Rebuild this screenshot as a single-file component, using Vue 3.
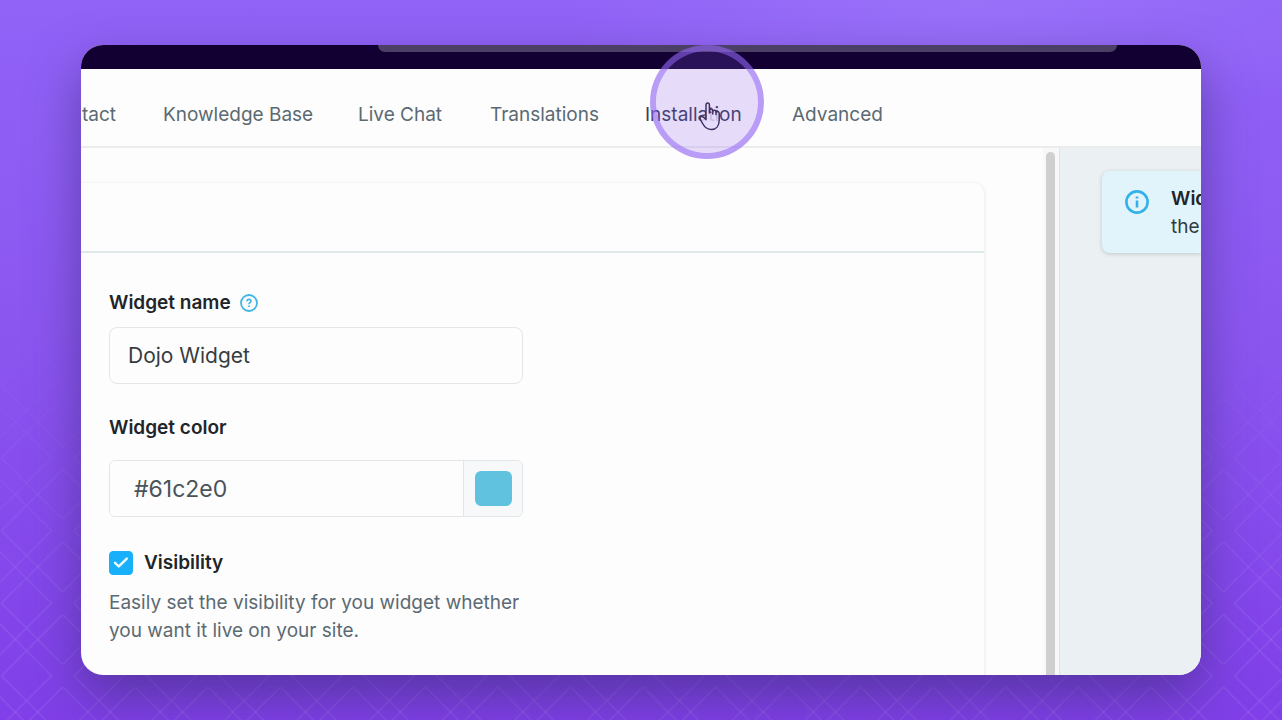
<script setup>
import { ref } from 'vue'

const tabs = ['Contact', 'Knowledge Base', 'Live Chat', 'Translations', 'Installation', 'Advanced']
const widgetName = ref('Dojo Widget')
const widgetColor = ref('#61c2e0')
const visible = ref(true)

// Neighbouring motifs overlap, so each pattern tile draws itself and its neighbours.
const offsets = [-1, 0, 1, 2].flatMap((x) => [-1, 0, 1, 2].map((y) => [x * 72.5, y * 72.5]))
</script>

<template>
  <div class="stage">
    <svg class="lattice" aria-hidden="true">
      <defs>
        <pattern id="diamonds" x="26.5" y="22.9" width="72.54" height="72.54" patternUnits="userSpaceOnUse">
          <path
            v-for="([x, y], i) in offsets"
            :key="i"
            :transform="`translate(${x} ${y})`"
            d="M36 -61L-25 0L36 61M-36 -61L25 0L-36 61"
            fill="none"
            stroke="#b79cf5"
            stroke-opacity=".22"
            stroke-width="1.3"
          />
        </pattern>
      </defs>
      <rect width="100%" height="100%" fill="url(#diamonds)" />
    </svg>

    <div class="window">
      <div class="topbar"><div class="topbar-field"></div></div>

      <nav class="tabs">
        <div v-for="tab in tabs" :key="tab" class="tab">
          <a href="#" :class="{ hovered: tab === 'Installation' }">{{ tab }}</a>
          <div v-if="tab === 'Installation'" class="pointer">
            <svg class="hand" viewBox="0 0 24 30" width="24" height="30" aria-hidden="true">
              <path
                d="M8 16V4.200Q8 2 9.700 2Q11.400 2 11.400 4.200V12M11.400 8.500Q14.600 6.800 14.800 10V13M14.800 10Q17.600 8 18 11V13.500M18 11.200Q21 9.400 21.200 12.500V19C21.200 25 18 28.500 13.500 28.500C9 28.500 6.500 26 4.600 22.500L2.400 18.500Q1.500 16.200 3.300 15.600Q5 15 8 18.500V13"
                fill="#e5dbfc"
                fill-opacity=".8"
                stroke="#40305f"
                stroke-width="1.5"
                stroke-linejoin="round"
                stroke-linecap="round"
              />
            </svg>
          </div>
        </div>
      </nav>

      <div class="body">
        <main class="editor">
          <section class="card">
            <header class="card-head"></header>
            <form class="form" @submit.prevent>
              <div class="label-row">
                <label for="widget-name">Widget name</label>
                <button class="help" type="button" aria-label="Help">
                  <svg viewBox="0 0 18 18" width="18" height="18" fill="none" stroke="#41b6e6">
                    <circle cx="9" cy="9" r="8" stroke-width="1.8" />
                    <path d="M7 7.300Q7.100 5.300 9 5.300Q11 5.300 11 7Q11 8.100 9.900 8.700Q9 9.200 9 10.200M9 11.600V13" stroke-width="1.700" />
                  </svg>
                </button>
              </div>
              <input id="widget-name" v-model="widgetName" class="text-input" type="text" />

              <div class="label-row color-label">
                <label for="widget-color">Widget color</label>
              </div>
              <div class="color-group">
                <input id="widget-color" v-model="widgetColor" class="color-input" type="text" />
                <div class="addon">
                  <button class="swatch" type="button" aria-label="Pick color" :style="{ background: widgetColor }"></button>
                </div>
              </div>

              <label class="check-row" for="visibility">
                <span class="check">
                  <input id="visibility" v-model="visible" type="checkbox" />
                  <svg v-if="visible" viewBox="0 0 24 24" width="24" height="24" fill="none" stroke="#eefaff" stroke-width="2.4" stroke-linecap="round" stroke-linejoin="round">
                    <path d="M6 11.800L9.800 15.400L17.800 7.600" />
                  </svg>
                </span>
                Visibility
              </label>
              <p class="hint">Easily set the visibility for you widget whether you want it live on your site.</p>
            </form>
          </section>
        </main>

        <div class="scrollbar"><div class="thumb"></div></div>

        <aside class="preview">
          <div class="notice">
            <svg class="info" viewBox="0 0 24 24" width="24" height="24" fill="none" stroke="#33b1e8">
              <circle cx="12" cy="12" r="10.600" stroke-width="2.600" />
              <path d="M12 10.500V17.500M12 6.500V8.500" stroke-width="2.600" />
            </svg>
            <div class="notice-text">
              <strong>Widget</strong>
              <div>the</div>
            </div>
          </div>
        </aside>
      </div>
    </div>
  </div>
</template>

<style>
body {
  margin: 0;
}
</style>

<style scoped>
.stage {
  box-sizing: border-box;
  position: relative;
  display: flex;
  min-height: 100vh;
  padding: 45px 81px;
  overflow: hidden;
  background:
    radial-gradient(ellipse 420px 140px at 76% 0, rgba(165, 135, 252, 0.4), rgba(165, 135, 252, 0)),
    linear-gradient(#9163f7, #8b56f0 45%, #803fe8);
  font-family: Inter, "Liberation Sans", sans-serif;
  font-size: 19px;
  line-height: 28px;
  color: #5b6a72;
}
.stage *,
.stage *::before {
  box-sizing: border-box;
}
.lattice {
  position: absolute;
  inset: 0;
  width: 100%;
  height: 100%;
  mask-image: linear-gradient(transparent 40%, #000 85%);
}
.window {
  position: relative;
  flex: 1;
  min-width: 0;
  display: flex;
  flex-direction: column;
  overflow: hidden;
  border-radius: 22px;
  background: #fdfdfd;
  box-shadow: 0 22px 50px rgba(60, 45, 120, 0.6);
}
.topbar {
  height: 24px;
  padding: 0 84px 0 297px;
  background: #120033;
}
.topbar-field {
  height: 7px;
  border-radius: 0 0 10px 10px;
  background: #4c3f66;
}
.tabs {
  display: grid;
  grid-template-columns: 82px 195px 132px 155px 147px auto;
  align-items: center;
  height: 79px;
  padding-top: 14px;
  border-bottom: 2px solid #ececee;
}
.tab {
  position: relative;
  display: flex;
  white-space: nowrap;
}
.tab:first-child {
  justify-content: flex-end;
  padding-right: 47px;
}
.tab a {
  color: inherit;
  text-decoration: none;
}
.tab .hovered {
  color: #353c58;
}
.pointer {
  position: absolute;
  top: -56px;
  left: 5px;
  z-index: 2;
  width: 114px;
  height: 114px;
  border: 6px solid rgba(144, 100, 243, 0.63);
  border-radius: 50%;
  background: rgba(139, 92, 240, 0.2);
  background-clip: padding-box;
}
.hand {
  position: absolute;
  top: 50px;
  left: 42px;
}
.body {
  flex: 1;
  display: flex;
}
.editor {
  flex: 1;
  display: flex;
  padding: 34px 58px 0 0;
}
.card {
  flex: 1;
  border-top: 1px solid #f5f5f6;
  border-right: 1px solid #f1f1f2;
  border-radius: 0 12px 0 0;
  box-shadow: 1px 0 3px rgba(0, 0, 0, 0.04);
}
.card-head {
  height: 70px;
  border-bottom: 2px solid #dfe8e8;
}
.form {
  max-width: 442px;
  padding: 36px 0 0 28px;
}
.label-row,
.check-row {
  display: flex;
  align-items: center;
  color: #1f2528;
  font-weight: 600;
}
.label-row {
  gap: 9px;
}
.help {
  display: flex;
  padding: 0;
  border: 0;
  background: none;
}
.text-input {
  display: block;
  width: 100%;
  height: 57px;
  margin-top: 10px;
  padding: 0 18px;
  border: 1px solid #e3e7e9;
  border-radius: 8px;
  background: #fdfdfd;
  color: #363c40;
  font: inherit;
  font-size: 21px;
}
.color-label {
  margin-top: 30px;
}
.color-group {
  display: flex;
  height: 57px;
  margin-top: 18px;
  overflow: hidden;
  border: 1px solid #e1e6e9;
  border-radius: 6px;
}
.color-input {
  flex: 1;
  min-width: 0;
  padding: 0 24px;
  border: 0;
  background: #fdfdfd;
  color: #49535a;
  font: inherit;
  font-size: 23px;
}
.addon {
  display: flex;
  align-items: center;
  justify-content: center;
  width: 59px;
  border-left: 1px solid #e1e6e9;
  background: #f6f8f9;
}
.swatch {
  width: 37px;
  height: 35px;
  padding: 0;
  border: 0;
  border-radius: 6px;
}
.check-row {
  gap: 11px;
  margin-top: 32px;
}
.check {
  display: grid;
}
.check input,
.check svg {
  grid-area: 1 / 1;
}
.check input {
  appearance: none;
  width: 24px;
  height: 24px;
  margin: 0;
  border: 1px solid #19b0fb;
  border-radius: 4px;
}
.check input:checked {
  background: #19b0fb;
}
.check svg {
  pointer-events: none;
}
.hint {
  margin: 12px 0 0;
}
.scrollbar {
  display: flex;
  width: 17px;
  padding: 4px 4px 0 3px;
  border-right: 1px solid #dfe2e4;
  background: #f8f8f8;
}
.thumb {
  flex: 1;
  border-radius: 5px 5px 0 0;
  background: #cfcfcf;
}
.preview {
  width: 141px;
  padding: 23px 0 0 42px;
  background: #ebf0f3;
}
.notice {
  display: flex;
  gap: 22px;
  height: 82px;
  padding: 14px 0 0 23px;
  border-radius: 8px 0 0 8px;
  background: #e1f4fc;
  box-shadow: 0 1px 4px rgba(60, 80, 90, 0.25);
  color: #303b40;
  white-space: nowrap;
}
.info {
  flex: none;
  margin-top: 5px;
}
.notice strong {
  color: #1f2528;
  font-weight: 600;
}
</style>
